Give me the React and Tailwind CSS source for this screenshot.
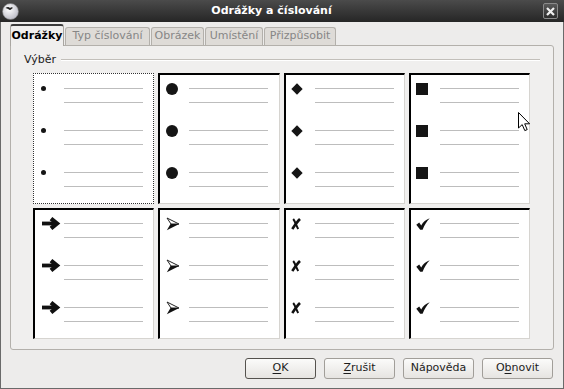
import React from 'react';

const font = { fontFamily: '"DejaVu Sans", "Liberation Sans", sans-serif' };

const SmallDot = () => <div className="w-[5px] h-[5px] rounded-full bg-[#151515] shrink-0" />;
const BigDot = () => <div className="w-[12px] h-[12px] rounded-full bg-[#151515] shrink-0" />;
const Diamond = () => (
  <div className="w-[12px] h-[12px] flex items-center justify-center shrink-0">
    <div className="w-[8px] h-[8px] rotate-45 bg-[#151515]" />
  </div>
);
const Square = () => <div className="w-[12px] h-[12px] bg-[#151515] shrink-0" />;

const HeavyArrow = () => (
  <svg width="19" height="13" viewBox="0 0 19 13" className="shrink-0">
    <path d="M0 4.6h12v3.8H0z" fill="#111" />
    <path d="M9 1.6 L15 6.5 L9 11.4" fill="none" stroke="#111" strokeWidth="4.2" />
  </svg>
);

const ArrowHead = () => (
  <svg width="14" height="14" viewBox="0 0 14 14" className="shrink-0">
    <path d="M1 1 L13 7 L5 7 Z" fill="#fff" stroke="#222" strokeWidth="1" strokeLinejoin="round" />
    <path d="M4.5 7 L13.2 7 L0.8 13.2 Z" fill="#111" />
  </svg>
);

const Cross = () => (
  <svg width="10" height="12" viewBox="0 0 10 12" className="shrink-0">
    <path d="M2.2 1 C4 3 5 7 7.2 11" stroke="#111" strokeWidth="2" fill="none" />
    <path d="M9 1 C6 4 4 7 1.2 11" stroke="#111" strokeWidth="2.6" fill="none" />
  </svg>
);

const Check = () => (
  <svg width="14" height="12" viewBox="0 0 14 12" className="shrink-0">
    <path d="M0.3 6.8 L3.2 4.6 L5.2 7.4 C7 3.8 10 1.6 13.7 0.3 C11 3 8.5 7 6.6 11.7 L4.2 11.7 Z" fill="#111" />
  </svg>
);

const cells = [
  { Icon: SmallDot, pad: 'pl-[7px]', selected: true },
  { Icon: BigDot, pad: 'pl-[6px]' },
  { Icon: Diamond, pad: 'pl-[5px]' },
  { Icon: Square, pad: 'pl-[5px]' },
  { Icon: HeavyArrow, pad: 'pl-[7px]' },
  { Icon: ArrowHead, pad: 'pl-[6px]' },
  { Icon: Cross, pad: 'pl-[5px]' },
  { Icon: Check, pad: 'pl-[5px]' },
];

const Cell = ({ Icon, pad, selected }) => (
  <div
    className={
      selected
        ? 'bg-white border border-dotted border-[#333] pt-[14px]'
        : 'bg-white border-t-2 border-l-2 border-r border-b border-t-black border-l-black border-r-[#d6d4d0] border-b-[#d6d4d0] pt-[13px]'
    }
  >
    {[0, 1, 2].map((i) => (
      <div key={i} className="flex h-[42px]">
        <div className={`${selected ? 'w-[30px]' : 'w-[29px]'} h-px flex items-center ${pad}`}>
          <Icon />
        </div>
        <div className="w-[79px]">
          <div className="h-px bg-[#bdbdbd]" />
          <div className="h-px bg-[#bdbdbd] mt-[13px]" />
        </div>
      </div>
    ))}
  </div>
);

const tabs = [
  { label: 'Typ číslování', w: 'w-[85px]' },
  { label: 'Obrázek', w: 'w-[53px]' },
  { label: 'Umístění', w: 'w-[58px]' },
  { label: 'Přizpůsobit', w: 'w-[72px]' },
];

const Button = ({ children, main }) => (
  <button
    className={`w-[71px] h-[21px] rounded-[3px] border bg-gradient-to-b from-[#fbfbfa] to-[#e6e4e1] text-[11px] text-[#1c1c1c] flex items-center justify-center ${
      main ? 'border-[#55524e]' : 'border-[#a19e99]'
    }`}
  >
    {children}
  </button>
);

export default function App() {
  return (
    <div style={font} className="w-[564px] h-[389px] flex flex-col overflow-hidden bg-[#edeceb] relative">
      {/* title bar */}
      <div className="h-[22px] shrink-0 bg-gradient-to-b from-[#4b4b4b] to-[#262626] flex items-center relative">
        <svg width="17" height="17" viewBox="0 0 17 17" className="ml-[2px]">
          <defs>
            <radialGradient id="g" cx="40%" cy="35%" r="70%">
              <stop offset="0" stopColor="#ffffff" />
              <stop offset="1" stopColor="#b9b9c4" />
            </radialGradient>
          </defs>
          <circle cx="8.5" cy="8.5" r="8" fill="url(#g)" stroke="#777" strokeWidth="0.6" />
          <path d="M3.5 5 C5 3.5 7 3.5 8 5 C9 3.8 10.5 4 11 5 C9.5 5.5 9 7 8 7 C7 6.8 5.5 5.5 3.5 5 Z" fill="#222" />
        </svg>
        <div className="flex-1 text-center text-white font-bold text-[11px] -ml-[19px]">Odrážky a číslování</div>
        <div className="w-[15px] h-[16px] mr-[6px] rounded-[2px] border border-[#8a8a8a] bg-gradient-to-b from-[#5a5a5a] to-[#2e2e2e] flex items-center justify-center">
          <svg width="9" height="9" viewBox="0 0 9 9">
            <path d="M1 1 L8 8 M8 1 L1 8" stroke="#f0f0f0" strokeWidth="2.2" />
          </svg>
        </div>
      </div>

      {/* body */}
      <div className="flex-1 flex flex-col border-l border-r border-b border-[#6a6a6a]">
        {/* tabs */}
        <div className="h-[23px] flex items-end pl-[9px]">
          <div className="relative z-10 -mb-px w-[54px] h-[22px] bg-[#f0efee] rounded-t-[3px] border-t-2 border-t-[#3a3a3a] border-l border-r border-l-[#a9a6a1] border-r-[#a9a6a1] flex items-center justify-center text-[11px] font-bold text-black">
            Odrážky
          </div>
          {tabs.map((t) => (
            <div
              key={t.label}
              className={`${t.w} h-[18px] ml-px bg-[#dedbd7] rounded-t-[3px] border border-b-0 border-[#b3b0ab] flex items-center justify-center text-[11px] text-[#868686]`}
            >
              {t.label}
            </div>
          ))}
        </div>

        {/* panel */}
        <div className="mx-[9px] h-[305px] shrink-0 border border-[#b3b0ab] rounded-b-[3px] rounded-tr-[3px] bg-[#f0efee]">
          <div className="mt-[7px] h-[14px] flex items-center pl-[13px] pr-[13px]">
            <span className="text-[11px] text-[#1c1c1c]">Výběr</span>
            <div className="flex-1 ml-[5px] border-t border-[#c2bfba] border-b border-b-white" />
          </div>
          <div className="mt-[6px] ml-[22px] w-[497px] grid grid-cols-4 gap-x-[4px] gap-y-[4px] grid-rows-[131px_131px]">
            {cells.map((c, i) => (
              <Cell key={i} {...c} />
            ))}
          </div>
        </div>

        {/* buttons */}
        <div className="mt-[8px] flex justify-end gap-[8px] pr-[10px]">
          <Button main>
            <span className="underline underline-offset-2">O</span>K
          </Button>
          <Button>
            <span className="underline underline-offset-2">Z</span>rušit
          </Button>
          <Button>Nápověda</Button>
          <Button>
            O<span className="underline underline-offset-2">b</span>novit
          </Button>
        </div>
      </div>

      {/* mouse pointer */}
      <svg width="13" height="20" viewBox="0 0 13 20" className="absolute left-[518px] top-[112px]">
        <path d="M0.5 0.5 L0.5 16 L4.2 12.6 L6.8 18.6 L9.2 17.6 L6.7 11.8 L11.6 11.8 Z" fill="#fff" stroke="#000" strokeWidth="1" strokeLinejoin="round" />
      </svg>
    </div>
  );
}
